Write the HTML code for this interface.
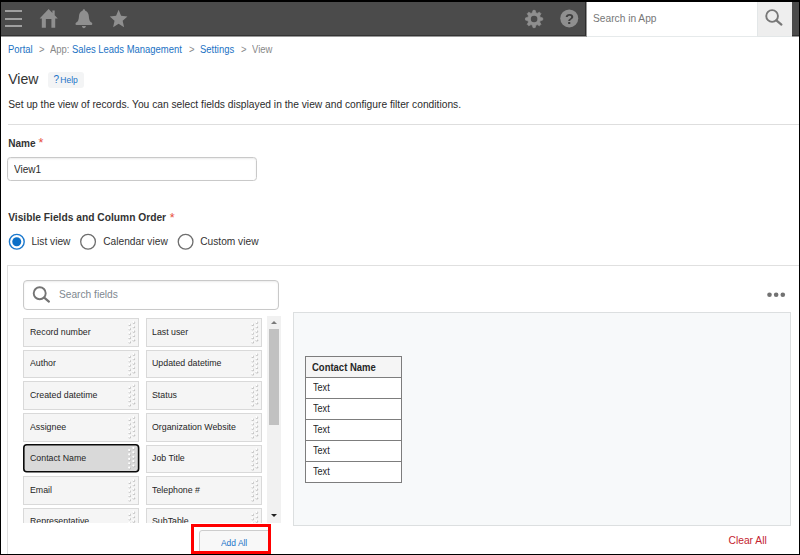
<!DOCTYPE html>
<html lang="en">
<head>
<meta charset="utf-8">
<title>View</title>
<style>
*{box-sizing:border-box;margin:0;padding:0}
html,body{width:800px;height:555px;overflow:hidden;background:#fff}
body{position:relative;font-family:"Liberation Sans",Arial,sans-serif;color:#333;font-size:10px}
.abs{position:absolute}
.t{position:absolute;white-space:nowrap;line-height:1}
a{color:#1a73c8;text-decoration:none}
a.bc{color:#1b72c4}
#frame{position:absolute;left:0;top:0;width:800px;height:555px;border-style:solid;border-color:#000;border-width:2px 1.5px 1px 1px;pointer-events:none;z-index:50}
#hdr{position:absolute;left:0;top:0;width:800px;height:36px;background:#4b4b4b;border-bottom:1px solid #343434}
#hdr2{position:absolute;left:0;top:36px;width:586px;height:1px;background:#999}
#hdr3{position:absolute;left:585px;top:0;width:1px;height:36px;background:#2c2c2c}
#hdr4{position:absolute;left:586px;top:0;width:1px;height:37px;background:#969696}
#hdr5{position:absolute;left:792px;top:36px;width:8px;height:1px;background:#999}
#sbox{position:absolute;left:587px;top:2px;width:170px;height:35px;background:#fff;box-shadow:inset 0 -1px 0 #e6eaeb}
#sbtn{position:absolute;left:757px;top:2px;width:35px;height:35px;background:#eee;border-left:1px solid #e3e7e8;border-bottom:1px solid #e3e7e8}
.hl{position:absolute;left:5px;width:17px;height:2px;background:#a0a0a0}
.bc{top:45.0px;font-size:10px;color:#888;transform:scaleX(.945);transform-origin:0 0}
.item{position:absolute;width:116.2px;height:28.5px;background:#f5f5f5;border:1px solid #d9d9d9;font-size:9.5px;color:#262626;white-space:nowrap}
.item span{position:absolute;left:5.9px;top:7.7px;line-height:1;transform:scaleX(.926);transform-origin:0 0}
.item svg{position:absolute;left:103.5px;top:0}
.c1{left:22.9px}.c2{left:145.7px}
.c2 span{left:5.2px}
.item.sel{background:none;border:0}
.item.sel svg.g{left:104.5px;top:1px}
.item.sel svg.b{left:0;top:0}
.item.sel span{left:6.9px;top:8.7px}
.rl{top:236.95px;font-size:10.2px;color:#333}
.tb{position:absolute;left:305.3px;top:356.2px;width:96.5px;height:126.4px;background:#fff;border:1px solid #7d7d7d}
.tb div{position:absolute;left:0;width:94.5px;height:1px;background:#7d7d7d}
.tb span{position:absolute;left:6.3px;line-height:1;font-size:10.4px;color:#262626;white-space:nowrap;transform:scaleX(.877);transform-origin:0 0}
</style>
</head>
<body>
<svg width="0" height="0" style="position:absolute"><defs><g id="grip"><circle cx="6.9" cy="3.6" r="1.3" fill="#bdbdbd"/><circle cx="6.4" cy="3.0" r="1.15" fill="#fff"/><circle cx="2.7" cy="5.7" r="1.3" fill="#bdbdbd"/><circle cx="2.2" cy="5.1" r="1.15" fill="#fff"/><circle cx="6.9" cy="8.0" r="1.3" fill="#bdbdbd"/><circle cx="6.4" cy="7.4" r="1.15" fill="#fff"/><circle cx="2.7" cy="10.1" r="1.3" fill="#bdbdbd"/><circle cx="2.2" cy="9.5" r="1.15" fill="#fff"/><circle cx="6.9" cy="12.4" r="1.3" fill="#bdbdbd"/><circle cx="6.4" cy="11.8" r="1.15" fill="#fff"/><circle cx="2.7" cy="14.5" r="1.3" fill="#bdbdbd"/><circle cx="2.2" cy="13.9" r="1.15" fill="#fff"/><circle cx="6.9" cy="16.8" r="1.3" fill="#bdbdbd"/><circle cx="6.4" cy="16.2" r="1.15" fill="#fff"/><circle cx="2.7" cy="18.9" r="1.3" fill="#bdbdbd"/><circle cx="2.2" cy="18.3" r="1.15" fill="#fff"/><circle cx="6.9" cy="21.2" r="1.3" fill="#bdbdbd"/><circle cx="6.4" cy="20.6" r="1.15" fill="#fff"/><circle cx="2.7" cy="23.3" r="1.3" fill="#bdbdbd"/><circle cx="2.2" cy="22.7" r="1.15" fill="#fff"/></g></defs></svg>
<div id="hdr"></div><div id="hdr2"></div><div id="hdr3"></div><div id="hdr4"></div><div id="hdr5"></div>
<div class="hl" style="top:10px"></div><div class="hl" style="top:18px"></div><div class="hl" style="top:25px"></div>
<!-- home -->
<svg class="abs" style="left:39px;top:9px" width="20" height="20" viewBox="0 0 20 20"><path fill="#8f8f8f" d="M9.6 0 L13.4 3.9 V1.6 H15.7 V6.3 L18.8 9.5 H16.2 V18.7 H12.4 V10.1 H6.85 V18.7 H2.8 V9.5 H0.6 Z"/></svg>
<!-- bell -->
<svg class="abs" style="left:75px;top:8.5px" width="18" height="20" viewBox="0 0 18 20"><path fill="#8f8f8f" d="M8.9 0.3 C9.7 0.3 10.2 0.9 10.2 1.7 C12.6 2.5 13.6 4.6 13.8 7 C14 10.4 14.5 12.5 16.9 13.8 C17.5 14.4 17.4 16.1 16.4 16.1 H1.4 C0.4 16.1 0.3 14.4 0.9 13.8 C3.3 12.5 3.8 10.4 4 7 C4.2 4.6 5.2 2.5 7.6 1.7 C7.6 0.9 8.1 0.3 8.9 0.3 Z M6.9 17.1 H10.9 C10.7 18.4 9.9 19.2 8.9 19.2 C7.9 19.2 7.1 18.4 6.9 17.1 Z"/></svg>
<!-- star -->
<svg class="abs" style="left:108px;top:9px" width="22" height="20" viewBox="0 0 22 20"><path fill="#8f8f8f" d="M10.60 0.80 L13.11 6.83 L19.44 7.43 L14.67 11.76 L16.07 18.17 L10.60 14.82 L5.13 18.17 L6.53 11.76 L1.76 7.43 L8.09 6.83 Z"/></svg>
<!-- gear -->
<svg class="abs" style="left:524px;top:8.5px" width="20" height="20" viewBox="0 0 20 20"><path fill="#8f8f8f" stroke="#8f8f8f" stroke-width="0.7" stroke-linejoin="round" d="M8.34 3.85 L9.04 1.36 L11.16 1.36 L11.86 3.85 L13.20 4.40 L15.46 3.14 L16.96 4.64 L15.70 6.90 L16.25 8.24 L18.74 8.94 L18.74 11.06 L16.25 11.76 L15.70 13.10 L16.96 15.36 L15.46 16.86 L13.20 15.60 L11.86 16.15 L11.16 18.64 L9.04 18.64 L8.34 16.15 L7.00 15.60 L4.74 16.86 L3.24 15.36 L4.50 13.10 L3.95 11.76 L1.46 11.06 L1.46 8.94 L3.95 8.24 L4.50 6.90 L3.24 4.64 L4.74 3.14 L7.00 4.40 Z"/><circle cx="10.1" cy="10.0" r="3.3" fill="#4b4b4b"/></svg>
<!-- help -->
<svg class="abs" style="left:559px;top:8px" width="21" height="21" viewBox="0 0 21 21"><circle cx="10.25" cy="10.4" r="9" fill="#8f8f8f"/></svg>
<div class="t" style="left:564.85px;top:11.7px;font-size:14.9px;font-weight:bold;color:#3e3e3e;will-change:transform">?</div>
<div id="sbox"></div><div id="sbtn"></div>
<div class="t" id="sia" style="left:593.4px;top:12.5px;font-size:11.8px;color:#777;transform:scaleX(.864);transform-origin:0 0">Search in App</div>
<svg class="abs" style="left:764.1px;top:8.3px" width="20" height="20" viewBox="0 0 20 20"><circle cx="8.1" cy="8" r="5.85" fill="none" stroke="#777" stroke-width="1.9"/><path d="M12.4 12.3 L17.4 16.6" stroke="#777" stroke-width="2.2" stroke-linecap="round"/></svg>

<!-- breadcrumb -->
<a class="t bc" style="left:8.2px">Portal</a><span class="t bc" style="left:38.6px">&gt;</span><span class="t bc" style="left:50.4px">App:</span><a class="t bc" style="left:72.2px">Sales Leads Management</a><span class="t bc" style="left:188.8px">&gt;</span><a class="t bc" style="left:200.4px">Settings</a><span class="t bc" style="left:240.6px">&gt;</span><span class="t bc" style="left:252.2px">View</span>
<div class="t" id="h1" style="left:8.2px;top:71.5px;font-size:14.1px;color:#333">View</div>
<div class="abs" style="left:48.3px;top:72px;width:35.3px;height:15.6px;background:#f3f4f5;border-radius:3px"></div>
<div class="t" style="left:53.4px;top:74.6px;font-size:10px;color:#1a73c8">?</div>
<div class="t" id="help" style="left:60.3px;top:75.9px;font-size:8.5px;color:#1a73c8">Help</div>
<div class="t" id="desc" style="left:8.2px;top:98px;font-size:10.24px;color:#2b2b2b;transform:translateY(1.5px);transform-origin:0 0">Set up the view of records. You can select fields displayed in the view and configure filter conditions.</div>
<div class="abs" style="left:8px;top:123.5px;width:792px;height:1px;background:#dedede"></div>

<div class="t" id="nm" style="left:8.2px;top:138.5px;font-size:10.05px;font-weight:bold;color:#333">Name</div>
<div class="t" style="left:38.6px;top:136.8px;font-size:12.5px;color:#e74c3c">*</div>
<div class="abs" style="left:7px;top:157.3px;width:249.7px;height:23.3px;border:1px solid #c9c9c9;border-radius:3.5px;background:#fff;box-shadow:inset 0 1px 2px #ebebeb"></div>
<div class="t" id="v1" style="left:14.2px;top:163.9px;font-size:10.5px;color:#2b2b2b;transform:scaleX(.955);transform-origin:0 0">View1</div>

<div class="t" id="vf" style="left:8.2px;top:213.2px;font-size:10.24px;font-weight:bold;color:#333">Visible Fields and Column Order</div>
<div class="t" style="left:169.8px;top:211.5px;font-size:12.5px;color:#e74c3c">*</div>
<svg class="abs" style="left:0;top:230px" width="200" height="24" viewBox="0 230 200 24"><circle cx="16.8" cy="241.75" r="7.4" fill="#fff" stroke="#1b78cd" stroke-width="1.4"/><circle cx="16.75" cy="241.8" r="4.5" fill="#0b6fc8"/><circle cx="88.05" cy="241.75" r="7.35" fill="#fff" stroke="#6e6e6e" stroke-width="1.3"/><circle cx="185.6" cy="241.75" r="7.35" fill="#fff" stroke="#6e6e6e" stroke-width="1.3"/></svg>
<div class="t rl" id="r1" style="left:31.4px">List view</div>
<div class="t rl" id="r2" style="left:103.2px">Calendar view</div>
<div class="t rl" id="r3" style="left:200.2px">Custom view</div>

<!-- panel -->
<div class="abs" style="left:7px;top:264.6px;width:800px;height:300px;border:1px solid #e0e0e0;border-right:0"></div>
<div class="abs" style="left:22.5px;top:279.8px;width:256.4px;height:30.2px;border:1px solid #c9c9c9;border-radius:4px;background:#fff;box-shadow:inset 0 1px 2px #ededed"></div>
<svg class="abs" style="left:31px;top:285px" width="22" height="20" viewBox="0 0 22 20"><circle cx="8.7" cy="8.25" r="6" fill="none" stroke="#747474" stroke-width="1.9"/><path d="M13.2 12.7 L17.9 16.6" stroke="#747474" stroke-width="2.2" stroke-linecap="round"/></svg>
<div class="t" id="sf" style="left:59.2px;top:289.1px;font-size:10.7px;color:#808890;transform:scaleX(.953);transform-origin:0 0">Search fields</div>

<div id="list" class="abs" style="left:0;top:312px;width:290px;height:211px;overflow:hidden">
 <div class="abs" style="left:0;top:-312px;width:290px;height:600px">
  <div class="item c1" style="top:318.2px"><span>Record number</span><svg class="g" width="10" height="26"><use href="#grip"/></svg></div><div class="item c2" style="top:318.2px"><span>Last user</span><svg class="g" width="10" height="26"><use href="#grip"/></svg></div>
  <div class="item c1" style="top:349.8px"><span>Author</span><svg class="g" width="10" height="26"><use href="#grip"/></svg></div><div class="item c2" style="top:349.8px"><span>Updated datetime</span><svg class="g" width="10" height="26"><use href="#grip"/></svg></div>
  <div class="item c1" style="top:381.4px"><span>Created datetime</span><svg class="g" width="10" height="26"><use href="#grip"/></svg></div><div class="item c2" style="top:381.4px"><span>Status</span><svg class="g" width="10" height="26"><use href="#grip"/></svg></div>
  <div class="item c1" style="top:413px"><span>Assignee</span><svg class="g" width="10" height="26"><use href="#grip"/></svg></div><div class="item c2" style="top:413px"><span>Organization Website</span><svg class="g" width="10" height="26"><use href="#grip"/></svg></div>
  <div class="item c1 sel" style="top:444.3px"><svg class="b" width="117" height="29"><rect x="0.8" y="0.8" width="114.8" height="27" rx="3" fill="#d9d9d9" stroke="#0a0a0a" stroke-width="1.6"/></svg><span>Contact Name</span><svg class="g" width="10" height="26"><use href="#grip"/></svg></div><div class="item c2" style="top:444.6px"><span>Job Title</span><svg class="g" width="10" height="26"><use href="#grip"/></svg></div>
  <div class="item c1" style="top:476.2px"><span>Email</span><svg class="g" width="10" height="26"><use href="#grip"/></svg></div><div class="item c2" style="top:476.2px"><span>Telephone #</span><svg class="g" width="10" height="26"><use href="#grip"/></svg></div>
  <div class="item c1" style="top:507.8px"><span>Representative</span><svg class="g" width="10" height="26"><use href="#grip"/></svg></div><div class="item c2" style="top:507.8px"><span>SubTable</span><svg class="g" width="10" height="26"><use href="#grip"/></svg></div>
  <!-- scrollbar -->
  <div class="abs" style="left:267.3px;top:315.5px;width:13.6px;height:208px;background:#f1f1f1"></div>
  <div class="abs" style="left:268.9px;top:329.4px;width:10.4px;height:95.8px;background:#c1c1c1"></div>
  <div class="abs" style="left:271.1px;top:321px;width:0;height:0;border:3px solid transparent;border-top:0;border-bottom:3.6px solid #7a7a7a"></div>
  <div class="abs" style="left:271.1px;top:513.8px;width:0;height:0;border:3px solid transparent;border-bottom:0;border-top:3.6px solid #222"></div>
 </div>
</div>

<!-- add all -->
<div class="abs" style="left:198.8px;top:530px;width:72px;height:30px;border:1px solid #cdcdcd;background:#f8f8f8;border-radius:3px"></div>
<div class="t" id="aa" style="left:221px;top:538.8px;font-size:8.9px;color:#1a73c8;transform:scaleX(.95);transform-origin:0 0">Add All</div>
<div class="abs" style="left:191.2px;top:523.9px;width:79.6px;height:29.8px;border:3px solid #f00"></div>

<!-- right -->
<svg class="abs" style="left:765px;top:290px" width="24" height="10" viewBox="0 0 24 10"><g fill="#727272"><circle cx="4.5" cy="4.8" r="2.3"/><circle cx="11.15" cy="4.8" r="2.3"/><circle cx="17.8" cy="4.8" r="2.3"/></g></svg>
<div class="abs" style="left:293px;top:312px;width:498px;height:214px;background:#f7f9fa;border:1px solid #dcdfe0"></div>
<div class="tb">
 <div style="top:0;height:20px;background:#f5f5f5"></div>
 <div style="top:20px"></div><div style="top:41.2px"></div><div style="top:62.2px"></div><div style="top:83.2px"></div><div style="top:104.2px"></div>
 <span style="left:5.7px;top:4.9px;font-size:10.6px;font-weight:bold;transform:scaleX(.895)">Contact Name</span>
 <span style="top:25.6px">Text</span><span style="top:46.6px">Text</span><span style="top:67.6px">Text</span><span style="top:88.6px">Text</span><span style="top:109.6px">Text</span>
</div>
<div class="t" id="ca" style="left:728.5px;top:535.8px;font-size:10.28px;color:#c4232f">Clear All</div>
<div id="frame"></div>
</body>
</html>
